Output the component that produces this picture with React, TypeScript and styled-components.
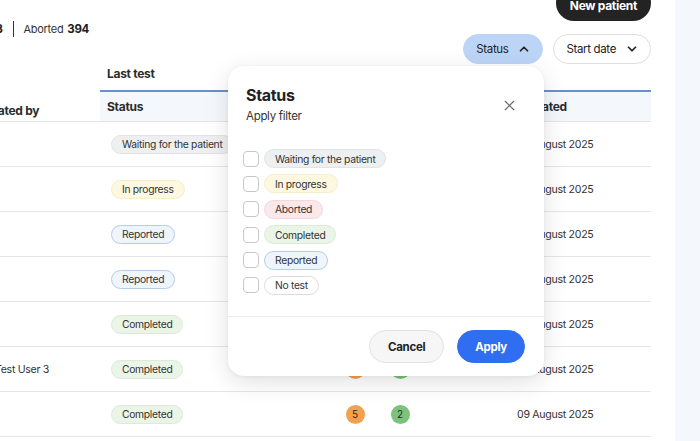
import React from 'react';
import styled, { createGlobalStyle } from 'styled-components';
import { ChevronUp, ChevronDown, X } from 'lucide-react';

type Tone = 'waiting' | 'progress' | 'aborted' | 'completed' | 'reported' | 'none';

const tones: Record<Tone, { bg: string; border: string }> = {
  waiting: { bg: '#eeeff1', border: '#e2e3e6' },
  progress: { bg: '#fdf8df', border: '#f6efcb' },
  aborted: { bg: '#fbe8ea', border: '#f3d7da' },
  completed: { bg: '#eaf5e8', border: '#dbebd7' },
  reported: { bg: '#eef5fc', border: '#b7cde6' },
  none: { bg: '#ffffff', border: '#dcdcdc' },
};

const GlobalStyle = createGlobalStyle`
  html, body { margin: 0; padding: 0; }
  body {
    font-family: Inter, "Noto Sans", "Liberation Sans", sans-serif;
    color: #2b2b2b;
    background: #fff;
    letter-spacing: -0.3px;
  }
`;

const Page = styled.div`
  display: flex;
  width: 700px;
  height: 441px;
  overflow: hidden;
`;

const Main = styled.div`
  position: relative;
  width: 675px;
  flex: none;
  overflow: hidden;
  background: #fff;
`;

const SidePanel = styled.div`
  flex: 1;
  background: #f4f7fc;
`;

const Content = styled.div`
  margin-left: -60px;
  padding-right: 24px;
`;

const TopBar = styled.div`
  display: flex;
  justify-content: flex-end;
  margin-top: -15px;
`;

const DarkButton = styled.button`
  height: 36px;
  padding: 5px 14px 0;
  border: none;
  border-radius: 18px;
  background: #232323;
  color: #fff;
  font: 700 12px Inter, sans-serif;
  letter-spacing: -0.3px;
`;

const ToolRow = styled.div`
  display: flex;
  justify-content: space-between;
  align-items: flex-start;
`;

const Stats = styled.div`
  display: flex;
  align-items: center;
  gap: 10px;
  margin: 0 0 0 -15px;
  font-size: 11px;
  line-height: 14px;
`;

const Stat = styled.span`
  color: #333;
  b { font-weight: 700; color: #222; font-size: 11.5px; margin-left: 4px; }
`;

const Divider = styled.span`
  width: 1px;
  height: 16px;
  background: #333;
`;

const Filters = styled.div`
  display: flex;
  gap: 10px;
  margin-top: 13px;
`;

const FilterButton = styled.button<{ $active?: boolean }>`
  display: flex;
  align-items: center;
  gap: 9px;
  height: 30px;
  padding: 0 11px 0 12px;
  border-radius: 15px;
  border: 1px solid ${(p) => (p.$active ? '#bcd5f7' : '#dedede')};
  background: ${(p) => (p.$active ? '#bcd5f7' : '#fff')};
  color: #222;
  font: 400 11.5px Inter, sans-serif;
  letter-spacing: -0.35px;
`;

const cols = '160px 230px 50px 40px 85px 146px';

const HeadGrid = styled.div`
  display: grid;
  grid-template-columns: ${cols};
  grid-template-rows: 28px 30px;
`;

const CornerHead = styled.div`
  grid-row: 1 / 3;
  display: flex;
  align-items: flex-end;
  padding: 0 0 3px 38px;
  border-bottom: 1px solid #e5e5e5;
  font-size: 12px;
  font-weight: 700;
  line-height: 14px;
`;

const GroupHead = styled.div`
  grid-column: 2 / 7;
  padding: 3px 0 0 7px;
  border-bottom: 2px solid #6a90c8;
  font-size: 12px;
  font-weight: 700;
  line-height: 14px;
`;

const HeadCell = styled.div<{ $pad?: number }>`
  display: flex;
  align-items: center;
  padding-left: ${(p) => p.$pad ?? 7}px;
  background: #f4f7fc;
  border-bottom: 1px solid #e5e5e5;
  font-size: 12px;
  font-weight: 700;
`;

const Row = styled.div`
  display: grid;
  grid-template-columns: ${cols};
  box-sizing: border-box;
  height: 45px;
  border-bottom: 1px solid #e6e6e6;
  align-items: center;
`;

const Cell = styled.div<{ $pad?: number; $center?: boolean }>`
  display: flex;
  align-items: center;
  justify-content: ${(p) => (p.$center ? 'center' : 'flex-start')};
  padding-left: ${(p) => p.$pad ?? 0}px;
  font-size: 10.6px;
  color: #333;
  white-space: nowrap;
`;

const Badge = styled.span<{ $tone: Tone }>`
  display: inline-flex;
  align-items: center;
  height: 19px;
  padding: 0 10px;
  border-radius: 10px;
  border: 1px solid ${(p) => tones[p.$tone].border};
  background: ${(p) => tones[p.$tone].bg};
  font-size: 10.3px;
  color: #333;
  white-space: nowrap;
  box-sizing: border-box;
`;

const Dot = styled.span<{ $color: string }>`
  display: inline-flex;
  align-items: center;
  justify-content: center;
  width: 19px;
  height: 19px;
  border-radius: 50%;
  background: ${(p) => p.$color};
  font-size: 10px;
  color: #2a2a2a;
`;

const Modal = styled.div`
  position: absolute;
  top: 66px;
  left: 228px;
  width: 316px;
  height: 310px;
  background: #fff;
  border-radius: 16px;
  box-shadow: 0 6px 24px rgba(0, 0, 0, 0.12), 0 1px 4px rgba(0, 0, 0, 0.05);
  display: flex;
  flex-direction: column;
`;

const ModalHead = styled.div`
  display: flex;
  justify-content: space-between;
  padding: 20px 23px 0 18px;
`;

const Title = styled.div`
  font-size: 16px;
  font-weight: 700;
  line-height: 18px;
  color: #222;
`;

const Subtitle = styled.div`
  margin-top: 4px;
  font-size: 11.5px;
  line-height: 16px;
  color: #333;
`;

const CloseButton = styled.button`
  display: flex;
  align-items: center;
  justify-content: center;
  width: 24px;
  height: 24px;
  margin-top: 7px;
  padding: 0;
  border: none;
  background: none;
  color: #666;
`;

const Options = styled.div`
  display: flex;
  flex-direction: column;
  gap: 6.4px;
  padding: 25px 15px 0;
  flex: 1;
`;

const Option = styled.label`
  display: flex;
  align-items: center;
  gap: 5px;
`;

const Check = styled.span`
  width: 16px;
  height: 16px;
  box-sizing: border-box;
  border: 1px solid #c8c8c8;
  border-radius: 4px;
  background: #fff;
`;

const ModalFoot = styled.div`
  display: flex;
  justify-content: flex-end;
  gap: 13px;
  padding: 13px 19px 13px;
  border-top: 1px solid #ececec;
`;

const FootButton = styled.button<{ $primary?: boolean }>`
  height: 33px;
  padding: 0 ${(p) => (p.$primary ? 17 : 18)}px;
  border-radius: 17px;
  border: 1px solid ${(p) => (p.$primary ? '#2f6ef0' : '#e2e2e2')};
  background: ${(p) => (p.$primary ? '#2f6ef0' : '#f6f6f7')};
  color: ${(p) => (p.$primary ? '#fff' : '#222')};
  font: 700 11.5px Inter, sans-serif;
  letter-spacing: -0.3px;
`;

const rows: { by: string; tone: Tone; label: string }[] = [
  { by: '', tone: 'waiting', label: 'Waiting for the patient' },
  { by: '', tone: 'progress', label: 'In progress' },
  { by: '', tone: 'reported', label: 'Reported' },
  { by: '', tone: 'reported', label: 'Reported' },
  { by: '', tone: 'completed', label: 'Completed' },
  { by: 'Test User 3', tone: 'completed', label: 'Completed' },
  { by: '', tone: 'completed', label: 'Completed' },
];

const options: { tone: Tone; label: string }[] = [
  { tone: 'waiting', label: 'Waiting for the patient' },
  { tone: 'progress', label: 'In progress' },
  { tone: 'aborted', label: 'Aborted' },
  { tone: 'completed', label: 'Completed' },
  { tone: 'reported', label: 'Reported' },
  { tone: 'none', label: 'No test' },
];

export default function App() {
  return (
    <>
      <GlobalStyle />
      <Page>
        <Main>
          <Content>
            <TopBar>
              <DarkButton>New patient</DarkButton>
            </TopBar>
            <ToolRow>
              <Stats>
                <Stat>
                  Reported<b>1 263</b>
                </Stat>
                <Divider />
                <Stat>
                  Aborted<b>394</b>
                </Stat>
              </Stats>
              <Filters>
                <FilterButton $active>
                  Status <ChevronUp size={14} strokeWidth={3} />
                </FilterButton>
                <FilterButton>
                  Start date <ChevronDown size={14} strokeWidth={3} />
                </FilterButton>
              </Filters>
            </ToolRow>
            <HeadGrid>
              <CornerHead>Created by</CornerHead>
              <GroupHead>Last test</GroupHead>
              <HeadCell>Status</HeadCell>
              <HeadCell />
              <HeadCell />
              <HeadCell />
              <HeadCell $pad={14}>Updated</HeadCell>
            </HeadGrid>
            {rows.map((r, i) => (
              <Row key={i}>
                <Cell $pad={55}>{r.by}</Cell>
                <Cell $pad={11}>
                  <Badge $tone={r.tone}>{r.label}</Badge>
                </Cell>
                <Cell $center>
                  <Dot $color="#f2a24e">5</Dot>
                </Cell>
                <Cell $center>
                  <Dot $color="#7cc27a">2</Dot>
                </Cell>
                <Cell />
                <Cell $pad={12}>09 August 2025</Cell>
              </Row>
            ))}
          </Content>
          <Modal>
            <ModalHead>
              <div>
                <Title>Status</Title>
                <Subtitle>Apply filter</Subtitle>
              </div>
              <CloseButton aria-label="Close">
                <X size={17} strokeWidth={1.6} />
              </CloseButton>
            </ModalHead>
            <Options>
              {options.map((o) => (
                <Option key={o.label}>
                  <Check />
                  <Badge $tone={o.tone}>{o.label}</Badge>
                </Option>
              ))}
            </Options>
            <ModalFoot>
              <FootButton>Cancel</FootButton>
              <FootButton $primary>Apply</FootButton>
            </ModalFoot>
          </Modal>
        </Main>
        <SidePanel />
      </Page>
    </>
  );
}
